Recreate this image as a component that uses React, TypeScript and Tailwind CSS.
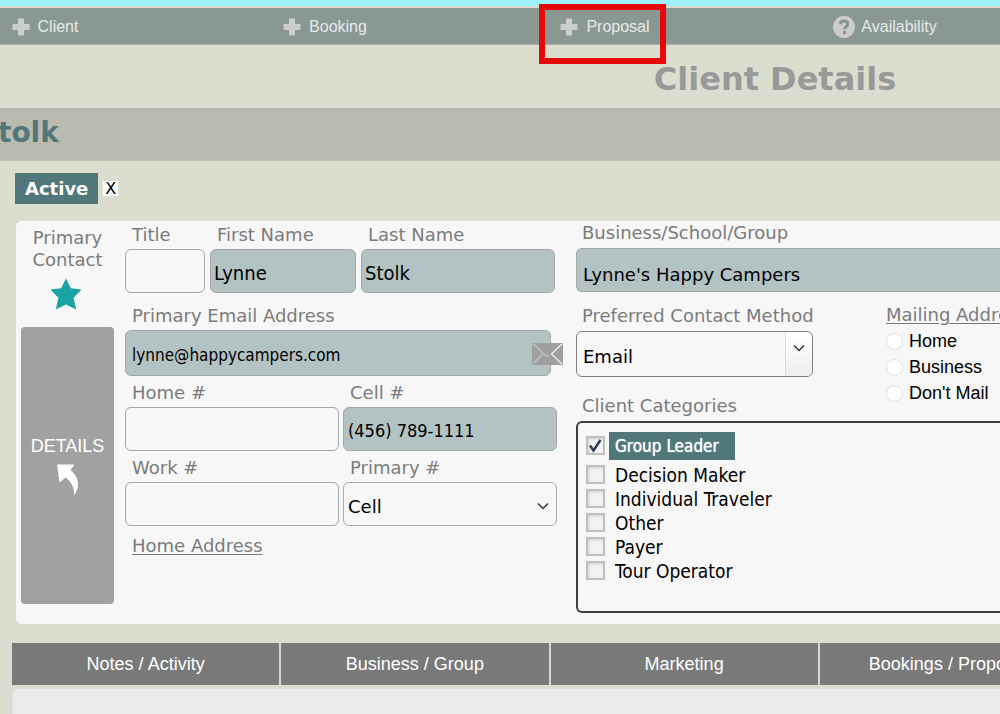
import { useState } from "react";
import type { ComponentProps, ReactNode } from "react";

const navItems = [
	{ title: "Client", icon: "plus", highlighted: false },
	{ title: "Booking", icon: "plus", highlighted: false },
	{ title: "Proposal", icon: "plus", highlighted: true },
	{ title: "Availability", icon: "help", highlighted: false },
];

const tabs = [
	"Notes / Activity",
	"Business / Group",
	"Marketing",
	"Bookings / Proposals",
];

const mailingOptions = ["Home", "Business", "Don't Mail"];

const categories = [
	"Group Leader",
	"Decision Maker",
	"Individual Traveler",
	"Other",
	"Payer",
	"Tour Operator",
];

function PlusIcon() {
	return (
		<svg viewBox="0 0 18 18" className="w-[18px] h-[18px]" aria-hidden="true">
			<path d="M6 0.5h6V6h5.5v6H12v5.5H6V12H0.5V6H6z" fill="#cdcdcd" />
		</svg>
	);
}

function HelpIcon() {
	return (
		<svg viewBox="0 0 22 22" className="w-[22px] h-[22px]" aria-hidden="true">
			<circle cx="11" cy="11" r="11" fill="#cdcdcd" />
			<path
				d="M7.2 8.4C7.3 6 8.800 5 11.100 5c2.200 0 3.600 1.100 3.600 3 0 2.600-3.200 2.700-3.200 5.500"
				fill="none"
				stroke="#84938e"
				strokeWidth="2.8"
			/>
			<rect x="10" y="15.2" width="3" height="3" fill="#84938e" />
		</svg>
	);
}

function StarIcon() {
	return (
		<svg viewBox="0 0 32 32" className="w-8 h-8" aria-hidden="true">
			<path
				d="M16 0.500l4.900 9.800 10.600 1.200-7.900 8.200 2.600 11.800L16 26.500 5.800 31.500l2.600-11.800L0.500 11.500l10.600-1.200z"
				fill="#1aa3a3"
			/>
		</svg>
	);
}

function CurvedArrow() {
	return (
		<svg viewBox="0 0 22 32" className="w-[22px] h-8" aria-hidden="true">
			<path
				d="M0 0.500h17.500l-4 5.500c7 6 11 15 3.500 25.500C17.500 24 14.500 17.500 8.500 13.500L2.500 18.500z"
				fill="#fff"
			/>
		</svg>
	);
}

function EnvelopeIcon() {
	return (
		<svg viewBox="0 0 31 22" className="w-[31px] h-[22px]" aria-hidden="true">
			<rect width="31" height="22" fill="#9f9f9f" />
			<path
				d="M1 1l12.500 11.500q2 1.500 4 0M1 21l10-10.500"
				fill="none"
				stroke="#b9c8c8"
				strokeWidth="1.300"
			/>
			<path
				d="M30 1L19.500 11L30 21"
				fill="none"
				stroke="#f4f4f4"
				strokeWidth="1.300"
			/>
		</svg>
	);
}

function Chevron() {
	return (
		<svg viewBox="0 0 12 8" className="w-3 h-2" aria-hidden="true">
			<path
				d="M1 1.500l5 5 5-5"
				fill="none"
				stroke="#333"
				strokeWidth="1.500"
			/>
		</svg>
	);
}

function Label({ id, children }: { id: string; children: ReactNode }) {
	return (
		<label
			htmlFor={id}
			className="flex items-center h-7 pb-[2px] pl-[7px] text-[18px] text-[#7b7b7b] whitespace-nowrap"
		>
			{children}
		</label>
	);
}

// the right hand side has its labels a little higher above the box
function SideLabel({ id, children }: { id: string; children: ReactNode }) {
	return (
		<label
			htmlFor={id}
			className="flex items-center h-[22px] mb-[5px] pl-[6px] text-[18px] text-[#7b7b7b] whitespace-nowrap"
		>
			{children}
		</label>
	);
}

function TextBox({ className, ...props }: ComponentProps<"input">) {
	return (
		<input
			type="text"
			className={`block w-full border border-[#a3a7a7] rounded-md text-black ${className}`}
			{...props}
		/>
	);
}

function NavBar() {
	return (
		<nav className="grid grid-cols-4 w-[112%] -ml-[95px] h-[37px] pt-[2px] bg-[#8a9894] border-b border-[#a9b1a9]">
			{navItems.map(({ title, icon, highlighted }) => (
				<div key={title} className="flex items-center justify-center">
					<button
						type="button"
						className="relative flex items-center text-[16px] text-[#e6e9e8] font-['Liberation_Sans',Arial,sans-serif]"
					>
						{icon === "plus" ? <PlusIcon /> : <HelpIcon />}
						<span className={icon === "plus" ? "ml-2" : "ml-[6px]"}>
							{title}
						</span>
						{highlighted && (
							<span className="absolute -left-[21px] -right-4 -top-[11px] h-[60px] border-6 border-[#e80808]" />
						)}
					</button>
				</div>
			))}
		</nav>
	);
}

function ContactColumn() {
	return (
		<div className="flex flex-col items-center w-[93px] shrink-0 pt-[6px] pb-[9px]">
			<p className="text-[18px] leading-[22px] text-center text-[#7b7b7b]">
				Primary Contact
			</p>
			<div className="-ml-1 mt-[7px]">
				<StarIcon />
			</div>
			<button
				type="button"
				className="flex flex-col items-center justify-center gap-2 w-full grow mt-[17px] rounded-sm bg-[#a1a1a1] text-white text-[18px] font-['Liberation_Sans',Arial,sans-serif]"
			>
				<span className="leading-5">DETAILS</span>
				<CurvedArrow />
			</button>
		</div>
	);
}

function PersonFields() {
	return (
		<div className="w-[432px] shrink-0">
			<div className="flex gap-[5px]">
				<div className="w-20">
					<Label id="title">Title</Label>
					<TextBox id="title" className="h-11 px-2 bg-[#f7f7f7]" />
				</div>
				<div className="w-[146px]">
					<Label id="first">First Name</Label>
					<TextBox
						id="first"
						defaultValue="Lynne"
						className="h-11 pt-1 px-[3px] bg-[#b3c3c3] text-[20px] font-['DejaVu_Sans_Condensed','DejaVu_Sans',sans-serif]"
					/>
				</div>
				<div className="w-[194px]">
					<Label id="last">Last Name</Label>
					<TextBox
						id="last"
						defaultValue="Stolk"
						className="h-11 pt-1 px-[3px] bg-[#b3c3c3] text-[20px] font-['DejaVu_Sans_Condensed','DejaVu_Sans',sans-serif]"
					/>
				</div>
			</div>

			<div className="mt-[9px]">
				<Label id="email">Primary Email Address</Label>
				<div className="relative w-[426px]">
					<TextBox
						id="email"
						defaultValue="lynne@happycampers.com"
						className="h-[46px] pt-1 px-[6px] bg-[#b3c3c3] text-[17px] font-['DejaVu_Sans_Condensed','DejaVu_Sans',sans-serif]"
					/>
					<a
						href="#email"
						aria-label="Send email"
						className="absolute -right-3 top-[13px]"
					>
						<EnvelopeIcon />
					</a>
				</div>
			</div>

			<div className="grid grid-cols-2 gap-x-1 gap-y-[3px] mt-[3px]">
				<div>
					<Label id="home">Home #</Label>
					<TextBox id="home" className="h-11 px-2 bg-[#f7f7f7]" />
				</div>
				<div>
					<Label id="cell">Cell #</Label>
					<TextBox
						id="cell"
						defaultValue="(456) 789-1111"
						className="h-11 pt-[2px] px-1 bg-[#b3c3c3] text-[18px] font-['DejaVu_Sans_Condensed','DejaVu_Sans',sans-serif]"
					/>
				</div>
				<div>
					<Label id="work">Work #</Label>
					<TextBox id="work" className="h-11 px-2 bg-[#f7f7f7]" />
				</div>
				<div>
					<Label id="primary">Primary #</Label>
					<div className="relative">
						<select
							id="primary"
							className="block appearance-none w-full h-11 px-1 pt-1 border border-[#a9a9a9] rounded-md bg-[#f7f7f7] text-[18px] text-black"
						>
							<option>Cell</option>
							<option>Home</option>
							<option>Work</option>
						</select>
						<span className="absolute right-2 top-5 pointer-events-none">
							<Chevron />
						</span>
					</div>
				</div>
			</div>

			<a
				href="#home-address"
				className="inline-flex items-center h-7 mt-[5px] ml-[7px] text-[18px] text-[#7b7b7b] underline underline-offset-2"
			>
				Home Address
			</a>
		</div>
	);
}

function CategoryList() {
	const [checked, setChecked] = useState<string[]>(["Group Leader"]);

	function toggle(name: string) {
		setChecked((prev) =>
			prev.includes(name) ? prev.filter((c) => c !== name) : [...prev, name]
		);
	}

	return (
		<div
			role="group"
			aria-labelledby="categories-label"
			className="min-h-48 pl-2 pt-[9px] border-2 border-r-0 border-[#404040] rounded-l-md font-['DejaVu_Sans_Condensed','DejaVu_Sans',sans-serif]"
		>
			{categories.map((name) => {
				const on = checked.includes(name);
				return (
					<label
						key={name}
						className={
							on
								? "flex items-center w-fit h-7 mb-[3px] text-[17px] text-white"
								: "flex items-center w-fit h-6 text-[19px] text-black"
						}
					>
						<span className="relative flex mb-[2px]">
							<input
								type="checkbox"
								checked={on}
								onChange={() => toggle(name)}
								className="appearance-none w-[19px] h-[19px] border-2 border-[#c0c0c0] bg-[#f3f3f3] shadow-[inset_1px_1px_3px_#cfcfcf]"
							/>
							{on && (
								<svg
									viewBox="0 0 19 19"
									className="absolute inset-0 w-[19px] h-[19px] pointer-events-none"
									aria-hidden="true"
								>
									<path
										d="M4 9.500l3.500 5L14.500 4"
										fill="none"
										stroke="#2b3d55"
										strokeWidth="2.400"
									/>
								</svg>
							)}
						</span>
						<span
							className={
								on
									? "flex items-center h-7 ml-1 pt-[2px] pl-[6px] pr-4 bg-[#50787a] [text-shadow:0_0_1px_#fff]"
									: "ml-[10px]"
							}
						>
							{name}
						</span>
					</label>
				);
			})}
		</div>
	);
}

function BusinessFields() {
	return (
		<div className="flex-1 min-w-0">
			<SideLabel id="business">Business/School/Group</SideLabel>
			<input
				id="business"
				type="text"
				defaultValue="Lynne's Happy Campers"
				className="block w-full h-11 pt-2 px-[6px] border border-r-0 border-[#a3a7a7] rounded-l-md bg-[#b3c3c3] text-[18px] text-black"
			/>

			<div className="flex mt-3">
				<div className="w-[237px] shrink-0">
					<SideLabel id="method">Preferred Contact Method</SideLabel>
					<div className="relative">
						<select
							id="method"
							className="block appearance-none w-full h-[46px] px-[6px] pt-1 border border-[#7f7f7f] rounded-md bg-[#f7f7f7] text-[18px] text-black"
						>
							<option>Email</option>
							<option>Phone</option>
							<option>Mail</option>
						</select>
						<span className="absolute right-px top-px bottom-px flex justify-center w-[27px] pt-3 border-l border-[#dcdcdc] rounded-r-md bg-linear-to-b from-white to-[#eeeeee] pointer-events-none">
							<Chevron />
						</span>
					</div>
				</div>
				<fieldset className="ml-[73px] min-w-0">
					<legend className="h-[22px] leading-[22px] text-[18px] text-[#7b7b7b] underline underline-offset-2 whitespace-nowrap">
						Mailing Address
					</legend>
					{/* three rows run past the drop-down without pushing the list down */}
					<div className="flex flex-col gap-[2px] mt-[3px] -mb-7">
						{mailingOptions.map((option) => (
							<label
								key={option}
								className="flex items-center gap-[6px] h-6 text-[18px] text-black whitespace-nowrap font-['Liberation_Sans',Arial,sans-serif]"
							>
								<input
									type="radio"
									name="mailing"
									value={option}
									className="appearance-none w-[17px] h-[17px] border border-[#dddddd] rounded-full bg-white checked:border-[5px] checked:border-[#50787a]"
								/>
								{option}
							</label>
						))}
					</div>
				</fieldset>
			</div>

			<div className="mt-[17px]">
				<p
					id="categories-label"
					className="flex items-center h-[22px] mb-[5px] pl-[6px] text-[18px] text-[#7b7b7b]"
				>
					Client Categories
				</p>
				<CategoryList />
			</div>
		</div>
	);
}

export default function App() {
	return (
		<div className="flex flex-col min-h-screen overflow-hidden bg-[#dbddcf] font-['DejaVu_Sans',Verdana,sans-serif]">
			<div className="h-[6px] mb-[2px] bg-[#a0f1ff]" />
			<NavBar />

			<header className="w-[155%]">
				<h1 className="h-[63px] leading-[68px] text-center text-[32px] font-bold text-[#999999]">
					Client Details
				</h1>
			</header>
			<div className="h-[53px] border-t-2 border-[#b5b6ae] bg-[#bbbaae]">
				<h2 className="-ml-[2px] leading-[46px] text-[28px] font-bold text-[#50787a]">
					tolk
				</h2>
			</div>

			<main className="flex flex-col grow">
				<div className="flex items-center gap-[5px] mt-3 ml-[15px]">
					<span className="h-[31px] px-[10px] leading-[32px] bg-[#50787a] text-[18px] font-bold text-white">
						Active
					</span>
					<button
						type="button"
						aria-label="Remove status"
						className="flex items-center justify-center w-[15px] h-[15px] bg-white text-[16px] leading-none text-black"
					>
						X
					</button>
				</div>

				<section className="flex mt-[17px] ml-4 pl-[5px] pb-[11px] rounded-l-md bg-[#f7f7f7]">
					<ContactColumn />
					<div className="flex flex-1 gap-[19px] min-w-0 ml-[11px]">
						<PersonFields />
						<BusinessFields />
					</div>
				</section>

				<div className="grid grid-cols-4 gap-[2px] w-[107.5%] mt-[19px] ml-3 bg-[#d6d6d2]">
					{tabs.map((tab) => (
						<button
							key={tab}
							type="button"
							className="h-[42px] bg-[#797979] text-[18px] text-white font-['Liberation_Sans',Arial,sans-serif]"
						>
							{tab}
						</button>
					))}
				</div>
				<div className="grow min-h-6 mt-[3px] ml-3 border-l border-t border-[#dededc] rounded-tl-md bg-[#ebebeb]" />
			</main>
		</div>
	);
}
